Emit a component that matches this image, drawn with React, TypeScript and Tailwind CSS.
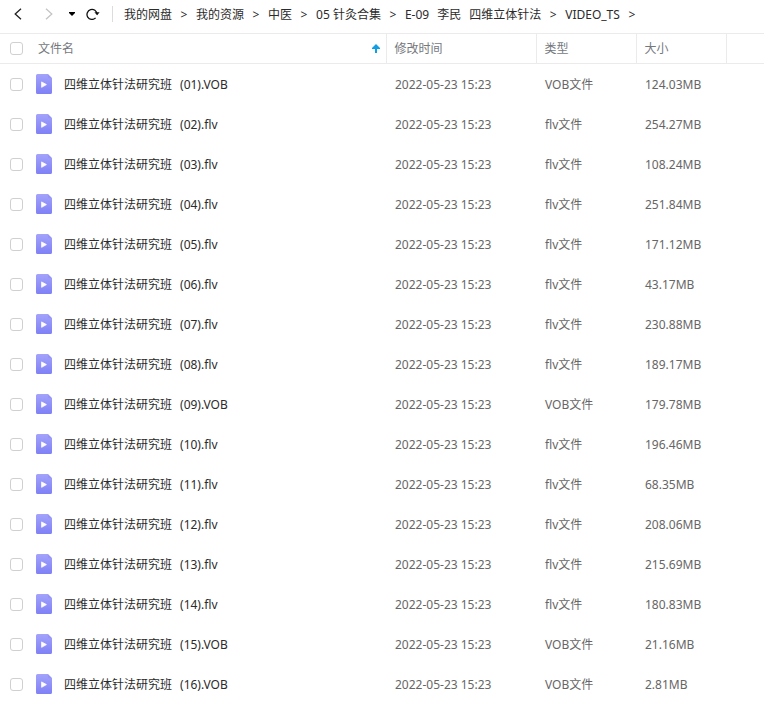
import { useEffect, useRef, useState } from 'react';

type FileRow = {
  no: string;
  ext: 'VOB' | 'flv';
  size: string;
};

const FOLDER_TITLE = '四维立体针法研究班';
const MODIFIED = '2022-05-23 15:23';

const CRUMBS: string[][] = [
  ['我的网盘'],
  ['我的资源'],
  ['中医'],
  ['05 针灸合集'],
  ['E-09', '李民', '四维立体针法'],
  ['VIDEO_TS'],
];

const FILES: FileRow[] = [
  { no: '01', ext: 'VOB', size: '124.03MB' },
  { no: '02', ext: 'flv', size: '254.27MB' },
  { no: '03', ext: 'flv', size: '108.24MB' },
  { no: '04', ext: 'flv', size: '251.84MB' },
  { no: '05', ext: 'flv', size: '171.12MB' },
  { no: '06', ext: 'flv', size: '43.17MB' },
  { no: '07', ext: 'flv', size: '230.88MB' },
  { no: '08', ext: 'flv', size: '189.17MB' },
  { no: '09', ext: 'VOB', size: '179.78MB' },
  { no: '10', ext: 'flv', size: '196.46MB' },
  { no: '11', ext: 'flv', size: '68.35MB' },
  { no: '12', ext: 'flv', size: '208.06MB' },
  { no: '13', ext: 'flv', size: '215.69MB' },
  { no: '14', ext: 'flv', size: '180.83MB' },
  { no: '15', ext: 'VOB', size: '21.16MB' },
  { no: '16', ext: 'VOB', size: '2.81MB' },
];

function VideoFileIcon() {
  return (
    <svg width="16" height="20" viewBox="0 0 16 20" className="shrink-0" aria-hidden="true">
      <defs>
        <linearGradient id="video-fill" x1="0" y1="0" x2="0" y2="1">
          <stop offset="0" stopColor="#a3a3fb" />
          <stop offset="1" stopColor="#7f80f5" />
        </linearGradient>
      </defs>
      <path d="M1.5 0H11.8L16 4.2V18.5A1.5 1.5 0 0 1 14.5 20H1.5A1.5 1.5 0 0 1 0 18.5V1.5A1.5 1.5 0 0 1 1.5 0Z" fill="url(#video-fill)" />
      <path d="M11.8 0L16 4.2H13.3A1.5 1.5 0 0 1 11.8 2.7Z" fill="#9394f5" />
      <path d="M5.6 7.9L10.4 10.6L5.6 13.3Z" fill="#fff" stroke="#fff" strokeWidth="0.8" strokeLinejoin="round" />
    </svg>
  );
}

type CheckProps = {
  label: string;
  checked: boolean;
  indeterminate?: boolean;
  onChange: () => void;
};

function Check({ label, checked, indeterminate = false, onChange }: CheckProps) {
  const ref = useRef<HTMLInputElement>(null);

  useEffect(() => {
    if (ref.current) ref.current.indeterminate = indeterminate;
  }, [indeterminate]);

  return (
    <input
      ref={ref}
      type="checkbox"
      aria-label={label}
      checked={checked}
      onChange={onChange}
      className="block size-[13px] appearance-none rounded-[3px] border border-[#d0d0d0] bg-white checked:border-[#06a7ff] checked:bg-[#06a7ff] indeterminate:bg-[#bfe6fb]"
    />
  );
}

function Toolbar() {
  return (
    <div className="mb-[5px] flex h-7 items-center whitespace-nowrap">
      <button type="button" aria-label="后退" className="ml-3 flex h-6 w-3 items-center justify-center text-[#222]">
        <svg width="8" height="12" viewBox="0 0 8 12" fill="none" stroke="currentColor" strokeWidth="1.3">
          <path d="M7 0.7L1.2 6L7 11.3" />
        </svg>
      </button>
      <button type="button" aria-label="前进" disabled className="ml-[19px] flex h-6 w-3 items-center justify-center text-[#c4c4c4]">
        <svg width="8" height="12" viewBox="0 0 8 12" fill="none" stroke="currentColor" strokeWidth="1.3">
          <path d="M1 0.7L6.8 6L1 11.3" />
        </svg>
      </button>
      <button type="button" aria-label="历史记录" className="ml-[11px] flex h-6 w-3 items-center justify-center text-black">
        <svg width="6" height="4" viewBox="0 0 6 4" fill="currentColor">
          <path d="M0 0H6V1L3 4L0 1Z" />
        </svg>
      </button>
      <button type="button" aria-label="刷新" className="ml-2 flex h-6 w-[14px] items-center justify-center text-[#111]">
        <svg width="14" height="12" viewBox="0 0 14 12" fill="none">
          <path d="M9.6 9.9A5 5 0 1 1 11 6.2" stroke="currentColor" strokeWidth="1.3" />
          <path d="M8.4 4.2H13.6L11.2 7.2Z" fill="currentColor" />
        </svg>
      </button>
      <span className="ml-3 h-4 w-px bg-[#dcdcdc]" />
      <nav aria-label="路径" className="ml-[11px] flex items-center gap-2 pt-0.5 text-[#2b2b2b]">
        {CRUMBS.map((parts) => (
          <span key={parts.join(' ')} className="flex items-center gap-2">
            <a href="#" className="flex gap-2">
              {parts.map((part) => (
                <span key={part}>{part}</span>
              ))}
            </a>
            <span className="w-2 text-center">&gt;</span>
          </span>
        ))}
      </nav>
    </div>
  );
}

export default function App() {
  const [selected, setSelected] = useState<string[]>([]);

  const toggle = (no: string) => {
    setSelected((prev) => (prev.includes(no) ? prev.filter((n) => n !== no) : [...prev, no]));
  };

  const allSelected = selected.length === FILES.length;

  return (
    <main className="min-h-screen bg-white font-['Noto_Sans','Noto_Sans_CJK_SC',sans-serif] text-xs">
      <Toolbar />
      <table className="w-full table-fixed border-collapse text-left">
        <colgroup>
          <col className="w-9" />
          <col />
          <col className="w-[150px]" />
          <col className="w-[100px]" />
          <col className="w-[90px]" />
          <col className="w-[38px]" />
        </colgroup>
        <thead>
          <tr className="h-[30px] border-y border-[#ebebeb] text-[#75787d]">
            <th className="p-0 pl-[10px]">
              <Check
                label="全选"
                checked={allSelected}
                indeterminate={selected.length > 0 && !allSelected}
                onChange={() => setSelected(allSelected ? [] : FILES.map((f) => f.no))}
              />
            </th>
            <th className="border-r border-[#ebebeb] p-0 pr-1.5 pl-0.5 font-normal">
              <button type="button" className="flex w-full items-center justify-between">
                文件名
                <svg width="8" height="9" viewBox="0 0 8 9" fill="#109fe6" aria-hidden="true">
                  <path d="M4 0L8 4V5H5V9H3V5H0V4Z" />
                </svg>
              </button>
            </th>
            <th className="border-r border-[#ebebeb] p-0 pl-2 font-normal">修改时间</th>
            <th className="border-r border-[#ebebeb] p-0 pl-2 font-normal">类型</th>
            <th className="border-r border-[#ebebeb] p-0 pl-2 font-normal">大小</th>
            <th className="p-0" />
          </tr>
        </thead>
        <tbody className="text-[#666]">
          {FILES.map((file) => (
            <tr key={file.no} className="h-10 hover:bg-[#f5fbff]">
              <td className="p-0 pt-0.5 pl-[10px]">
                <Check
                  label={`${FOLDER_TITLE} (${file.no}).${file.ext}`}
                  checked={selected.includes(file.no)}
                  onChange={() => toggle(file.no)}
                />
              </td>
              <td className="p-0">
                <a href="#" className="flex items-center text-[#2b2b2b]">
                  <VideoFileIcon />
                  <span className="ml-3 pt-0.5">{FOLDER_TITLE}</span>
                  <span className="ml-2 pt-0.5">
                    ({file.no}).{file.ext}
                  </span>
                </a>
              </td>
              <td className="p-0 pt-0.5 pl-[9px]">{MODIFIED}</td>
              <td className="p-0 pt-0.5 pl-[9px]">{file.ext}文件</td>
              <td className="p-0 pt-0.5 pl-[9px]">{file.size}</td>
              <td className="p-0" />
            </tr>
          ))}
        </tbody>
      </table>
    </main>
  );
}
